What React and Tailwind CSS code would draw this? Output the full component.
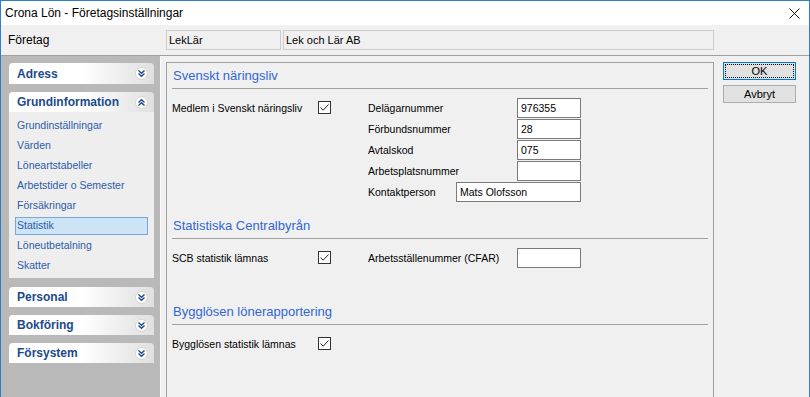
import React from "react";

const menuItems = [
  "Grundinställningar",
  "Värden",
  "Löneartstabeller",
  "Arbetstider o Semester",
  "Försäkringar",
  "Statistik",
  "Löneutbetalning",
  "Skatter",
];

function Chevrons({ up }) {
  return (
    <span className="flex h-[13px] w-[13px] items-center justify-center rounded-full border border-[#d4d4d4] bg-white">
      <svg width="9" height="9" viewBox="0 0 9 9" fill="none" stroke="#1b4a8a" strokeWidth="1.4">
        {up ? (
          <>
            <path d="M1.5 4.5 L4.5 1.8 L7.5 4.5" />
            <path d="M1.5 7.5 L4.5 4.8 L7.5 7.5" />
          </>
        ) : (
          <>
            <path d="M1.5 1.5 L4.5 4.2 L7.5 1.5" />
            <path d="M1.5 4.5 L4.5 7.2 L7.5 4.5" />
          </>
        )}
      </svg>
    </span>
  );
}

function SideHeader({ title, up, tall }) {
  return (
    <div
      className={`flex ${tall ? "h-[21px]" : "h-[20px]"} items-center justify-between rounded-t-[4px] bg-linear-to-r from-white via-white to-[#e0e0e0] pl-[8px] pr-[6px]`}
    >
      <span className="text-[12px] font-bold text-[#1b4a8a]">{title}</span>
      <Chevrons up={up} />
    </div>
  );
}

function Check() {
  return (
    <span className="mt-[3px] flex h-[13px] w-[13px] items-center justify-center border border-[#333333] bg-white">
      <svg width="11" height="11" viewBox="0 0 11 11" fill="none" stroke="#222" strokeWidth="1">
        <path d="M1.5 5.5 L4.2 8.2 L9.5 2.5" />
      </svg>
    </span>
  );
}

function Field({ value, width }) {
  return (
    <div className={`h-[20px] ${width} border border-[#7a7a7a] bg-white pl-[3px] leading-[18px]`}>
      {value}
    </div>
  );
}

function SectionHeading({ title }) {
  return (
    <div className="mx-[5px] flex h-[26px] items-center border-b border-[#a0a0a0] pl-[1px] pt-[1px] text-[13px] text-[#3267d2]">
      {title}
    </div>
  );
}

export default function App() {
  return (
    <div className="flex h-[397px] w-[810px] flex-col overflow-hidden border-x border-t border-[#2f7fc4] bg-[#f0f0f0] font-['Liberation_Sans',Arial,sans-serif] text-[10.5px] text-black">
      {/* title bar */}
      <div className="flex h-[24px] shrink-0 items-center justify-between bg-white pl-[4px] pr-[9px]">
        <span className="text-[12px]">Crona Lön - Företagsinställningar</span>
        <svg width="11" height="11" viewBox="0 0 11 11" stroke="#111" strokeWidth="1">
          <path d="M0.5 0.5 L10.5 10.5 M10.5 0.5 L0.5 10.5" />
        </svg>
      </div>

      {/* company row */}
      <div className="flex h-[31px] shrink-0 items-center border-b border-[#a0a0a0] pl-[7px]">
        <span className="w-[158px] text-[12px]">Företag</span>
        <div className="h-[20px] w-[115px] border border-[#cccccc] pl-[2px] text-[11px] leading-[18px]">LekLär</div>
        <div className="ml-[2px] h-[20px] w-[431px] border border-[#cccccc] pl-[2px] text-[11px] leading-[18px]">
          Lek och Lär AB
        </div>
      </div>

      <div className="flex min-h-0 flex-1">
        {/* sidebar */}
        <div className="flex w-[159px] shrink-0 flex-col gap-[8px] bg-[#b9b9b9] pl-[8px] pr-[6px] pt-[7px]">
          <SideHeader title="Adress" tall />
          <div>
            <SideHeader title="Grundinformation" up />
            <div className="bg-[#eeeeee] pb-[2px] pt-[4px]">
              {menuItems.map((item) => (
                <div key={item} className="flex h-[20px] items-center">
                  <div
                    className={`mx-[6px] flex h-[18px] flex-1 items-center border px-[1px] text-[#2b5ca8] ${
                      item === "Statistik" ? "border-[#7aa7d9] bg-[#cde4f7]" : "border-transparent"
                    }`}
                  >
                    {item}
                  </div>
                </div>
              ))}
            </div>
          </div>
          <div className="mt-[1px]">
            <SideHeader title="Personal" />
          </div>
          <SideHeader title="Bokföring" />
          <SideHeader title="Försystem" />
        </div>

        {/* main */}
        <div className="flex flex-1 border-l border-[#fafafa] pl-[5px] pt-[6px]">
          <div className="w-[548px] shrink-0 border-l border-r border-t border-[#a0a0a0]">
            <SectionHeading title="Svenskt näringsliv" />
            <div className="flex pl-[5px] pt-[9px] leading-[20px]">
              <div className="flex w-[159px] items-start">
                <span className="h-[21px] w-[146px]">Medlem i Svenskt näringsliv</span>
                <Check />
              </div>
              <div className="ml-[37px] flex flex-col">
                <div className="flex h-[21px]">
                  <span className="w-[149px]">Delägarnummer</span>
                  <Field value="976355" width="w-[64px]" />
                </div>
                <div className="flex h-[21px]">
                  <span className="w-[149px]">Förbundsnummer</span>
                  <Field value="28" width="w-[64px]" />
                </div>
                <div className="flex h-[21px]">
                  <span className="w-[149px]">Avtalskod</span>
                  <Field value="075" width="w-[64px]" />
                </div>
                <div className="flex h-[21px]">
                  <span className="w-[149px]">Arbetsplatsnummer</span>
                  <Field value="" width="w-[64px]" />
                </div>
                <div className="flex h-[21px]">
                  <span className="w-[88px]">Kontaktperson</span>
                  <Field value="Mats Olofsson" width="w-[125px]" />
                </div>
              </div>
            </div>

            <div className="mt-[10px]">
              <SectionHeading title="Statistiska Centralbyrån" />
            </div>
            <div className="flex pl-[5px] pt-[9px] leading-[20px]">
              <div className="flex w-[159px] items-start">
                <span className="h-[21px] w-[146px]">SCB statistik lämnas</span>
                <Check />
              </div>
              <div className="ml-[37px] flex h-[21px]">
                <span className="w-[149px]">Arbetsställenummer (CFAR)</span>
                <Field value="" width="w-[64px]" />
              </div>
            </div>

            <div className="mt-[30px]">
              <SectionHeading title="Bygglösen lönerapportering" />
            </div>
            <div className="flex pl-[5px] pt-[9px] leading-[20px]">
              <div className="flex w-[159px] items-start">
                <span className="h-[21px] w-[146px]">Bygglösen statistik lämnas</span>
                <Check />
              </div>
            </div>
          </div>

          {/* buttons */}
          <div className="ml-[9px] flex w-[73px] flex-col gap-[5px] text-[11px]">
            <button className="flex h-[18px] items-center justify-center border border-[#0078d7] bg-[#e1e1e1] p-[1px]">
              <span className="flex h-full w-full items-center justify-center border border-dotted border-black leading-none">
                OK
              </span>
            </button>
            <button className="flex h-[18px] items-center justify-center border border-[#adadad] bg-[#e1e1e1] leading-none">
              Avbryt
            </button>
          </div>
        </div>
      </div>
    </div>
  );
}
